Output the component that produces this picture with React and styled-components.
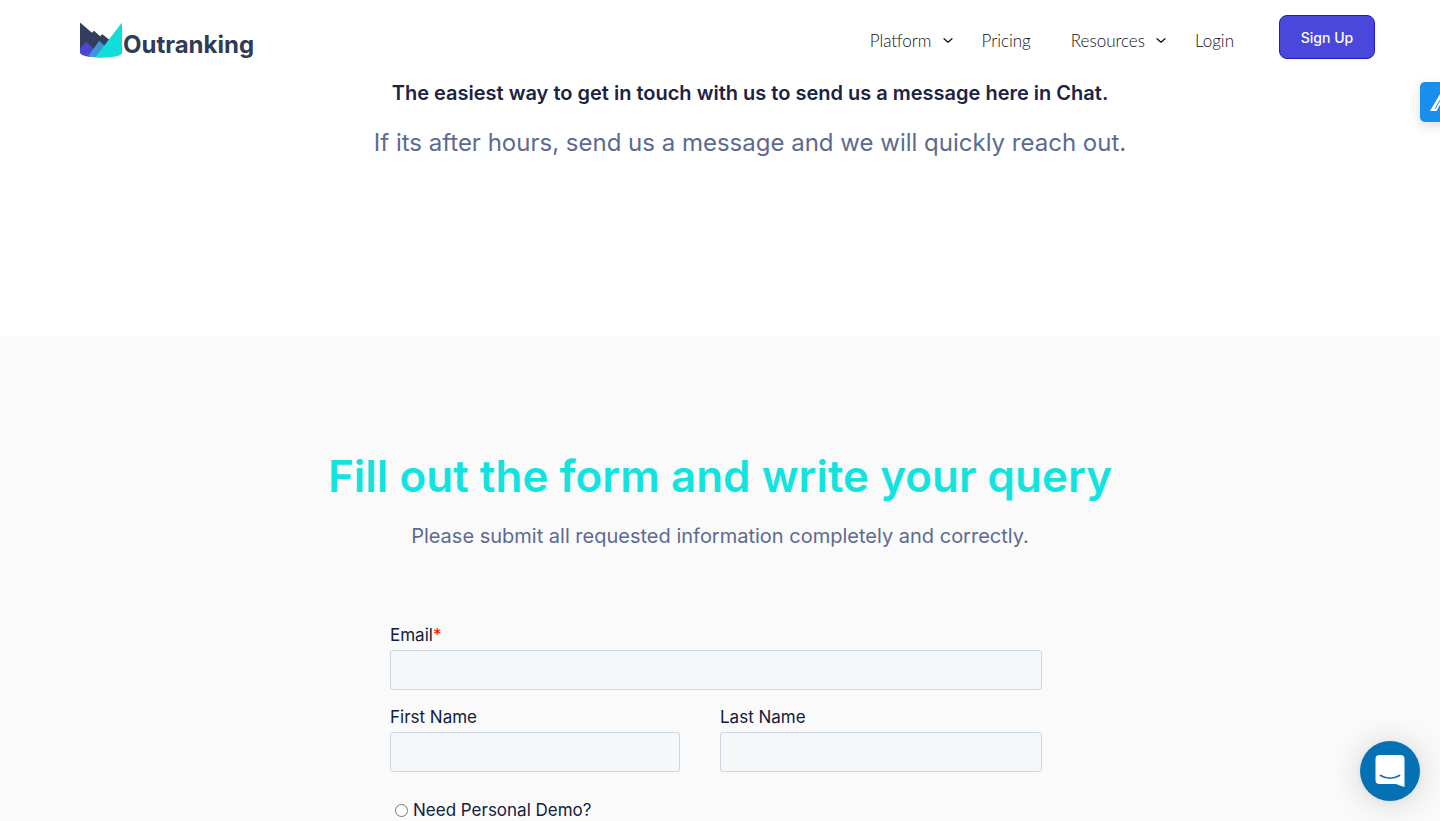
import React from 'react';
import styled, { createGlobalStyle, css } from 'styled-components';

const GlobalStyle = createGlobalStyle`
  *,
  *::before,
  *::after {
    box-sizing: border-box;
  }

  body {
    margin: 0;
    background: #fff;
    color: #1c2344;
    font-family: Inter, 'Open Sans', sans-serif;
  }

  h1,
  h2,
  p {
    margin: 0;
  }
`;

const Header = styled.header`
  position: sticky;
  top: 0;
  z-index: 10;
  display: flex;
  align-items: flex-start;
  justify-content: space-between;
  height: 80px;
  padding: 15px 65px 0 80px;
  background: #fff;
`;

const Brand = styled.a`
  display: flex;
  align-items: center;
  gap: 1px;
  height: 50px;
  color: #2f3b57;
  font-size: 24px;
  font-weight: 700;
  text-decoration: none;

  span {
    padding-top: 8px;
  }
`;

const Nav = styled.nav`
  display: flex;
  align-items: flex-start;
`;

const navItem = css`
  display: flex;
  align-items: center;
  height: 50px;
  border: 0;
  background: none;
  color: #111;
  font-family: Lato, sans-serif;
  font-size: 17px;
  font-weight: 300;
  text-decoration: none;
  cursor: pointer;
`;

const NavLink = styled.a`
  ${navItem}
  padding: 0 20px;
`;

const NavMenu = styled.button`
  ${navItem}
  padding: 0 0 0 20px;

  svg {
    width: 30px;
    height: 8px;
  }
`;

const SignUp = styled.a`
  display: flex;
  align-items: center;
  justify-content: center;
  width: 96px;
  height: 44px;
  margin-left: 25px;
  border: 1px solid #2418bd;
  border-radius: 8px;
  background: #4a47dc;
  color: #fff;
  font-size: 14px;
  font-weight: 500;
  text-decoration: none;
`;

const Intro = styled.section`
  padding: 0 60px 175px 120px;
  text-align: center;
`;

const IntroTitle = styled.h2`
  font-size: 20px;
  font-weight: 600;
  line-height: 26px;
`;

const IntroText = styled.p`
  padding-top: 19px;
  color: #5c6a91;
  font-size: 24px;
  line-height: 36px;
`;

const Contact = styled.section`
  padding: 110px 20px 60px;
  background: #fafafa;
  text-align: center;
`;

const ContactTitle = styled.h1`
  color: #13e3df;
  font-size: 44px;
  font-weight: 600;
  line-height: 60px;
`;

const ContactText = styled.p`
  padding-top: 15px;
  color: #5c6a91;
  font-size: 20px;
  line-height: 30px;
`;

const Form = styled.form`
  display: grid;
  grid-template-columns: 290fr 322fr;
  column-gap: 40px;
  row-gap: 17px;
  max-width: 660px;
  margin: 74px auto 0;
  padding-right: 8px;
  color: #12203f;
  font-size: 17px;
  text-align: left;
`;

const Field = styled.div`
  grid-column: ${({ $wide }) => ($wide ? '1 / -1' : 'auto')};
`;

const Label = styled.label`
  display: block;
  line-height: 20px;
  margin-bottom: 5px;

  span {
    color: #f00;
  }
`;

const Input = styled.input`
  display: block;
  width: 100%;
  height: 40px;
  padding: 9px 10px;
  border: 1px solid #cbd6e2;
  border-radius: 3px;
  background: #f4f8fb;
  color: #33475b;
  font: inherit;
`;

const RadioLabel = styled.label`
  display: flex;
  grid-column: 1 / -1;
  align-items: center;
  gap: 5px;
  padding: 11px 0 0 5px;
  line-height: 20px;

  input {
    width: 13px;
    height: 13px;
    margin: 0;
  }
`;

const SideTab = styled.button`
  position: fixed;
  top: 82px;
  right: -20px;
  z-index: 20;
  width: 40px;
  height: 40px;
  padding: 0;
  border: 0;
  border-radius: 5px;
  background: #1a8eed;
  box-shadow: 0 4px 12px rgba(0, 0, 0, 0.14);
  cursor: pointer;

  svg {
    display: block;
  }
`;

const ChatButton = styled.button`
  position: fixed;
  right: 20px;
  bottom: 20px;
  z-index: 20;
  width: 60px;
  height: 60px;
  padding: 0;
  border: 0;
  border-radius: 50%;
  background: #0571b5;
  box-shadow: 0 1px 6px rgba(0, 0, 0, 0.06), 0 2px 32px rgba(0, 0, 0, 0.16);
  cursor: pointer;

  svg {
    display: block;
  }
`;

const LogoMark = () => (
  <svg width='42' height='36' viewBox='0 0 42 36' aria-hidden='true'>
    <path
      d='M0 0.5 L12 10.8 L14 8.7 L20 14.2 L22.3 12.2 L30 18.2 L22 32 L4 32 L0 30 Z'
      fill='#343d5b'
    />
    <path
      d='M6.3 19.5 L14 27.5 L11 35 Q0 33.5 0 30.5 V26.5 Z'
      fill='#4a47cf'
    />
    <path d='M19.3 18.8 L27 26 L22 35.5 Q14 35.5 8 34.2 Z' fill='#3f96d6' />
    <path
      d='M42 0.5 V30.5 Q42 35.5 21 35.5 L15.5 35.3 L27 20 Z'
      fill='#10dfd9'
    />
  </svg>
);

const Chevron = () => (
  <svg viewBox='0 0 30 8' aria-hidden='true'>
    <path
      d='M12 2.8 L16 6.2 L20 2.8'
      fill='none'
      stroke='#111'
      strokeWidth='1.3'
      strokeLinecap='round'
      strokeLinejoin='round'
    />
  </svg>
);

const TextField = ({ name, label, type = 'text', required, wide }) => (
  <Field $wide={wide}>
    <Label htmlFor={name}>
      {label}
      {required && <span>*</span>}
    </Label>
    <Input id={name} name={name} type={type} required={required} />
  </Field>
);

const App = () => (
  <>
    <GlobalStyle />
    <Header>
      <Brand href='/'>
        <LogoMark />
        <span>Outranking</span>
      </Brand>
      <Nav>
        <NavMenu type='button'>
          Platform
          <Chevron />
        </NavMenu>
        <NavLink href='/pricing'>Pricing</NavLink>
        <NavMenu type='button'>
          Resources
          <Chevron />
        </NavMenu>
        <NavLink href='/login'>Login</NavLink>
        <SignUp href='/signup'>Sign Up</SignUp>
      </Nav>
    </Header>
    <main>
      <Intro>
        <IntroTitle>
          The easiest way to get in touch with us to send us a message here in
          Chat.
        </IntroTitle>
        <IntroText>
          If its after hours, send us a message and we will quickly reach out.
        </IntroText>
      </Intro>
      <Contact>
        <ContactTitle>Fill out the form and write your query</ContactTitle>
        <ContactText>
          Please submit all requested information completely and correctly.
        </ContactText>
        <Form>
          <TextField name='email' label='Email' type='email' required wide />
          <TextField name='firstname' label='First Name' />
          <TextField name='lastname' label='Last Name' />
          <RadioLabel>
            <input type='radio' name='demo' value='yes' />
            Need Personal Demo?
          </RadioLabel>
        </Form>
      </Contact>
    </main>
    <SideTab type='button' aria-label='Open assistant'>
      <svg width='40' height='40' viewBox='0 0 40 40'>
        <path
          d='M10 29 L20 12 H24 L31 29 H25 L21.5 20 L16.5 29 Z'
          fill='#fff'
        />
        <path d='M15 27 L20.5 17.5' stroke='#1a8eed' strokeWidth='1' />
      </svg>
    </SideTab>
    <ChatButton type='button' aria-label='Open chat'>
      <svg width='60' height='60' viewBox='0 0 60 60'>
        <path
          d='M19.5 14 H40.5 Q44.5 14 44.5 18 V46 Q39.5 44.3 36 43 H19.5 Q15.5 43 15.5 39 V18 Q15.5 14 19.5 14 Z'
          fill='#fff'
        />
        <path
          d='M20.5 34.5 Q30 40 39.5 34.5'
          fill='none'
          stroke='#0571b5'
          strokeWidth='1.7'
          strokeLinecap='round'
        />
      </svg>
    </ChatButton>
  </>
);

export default App;
